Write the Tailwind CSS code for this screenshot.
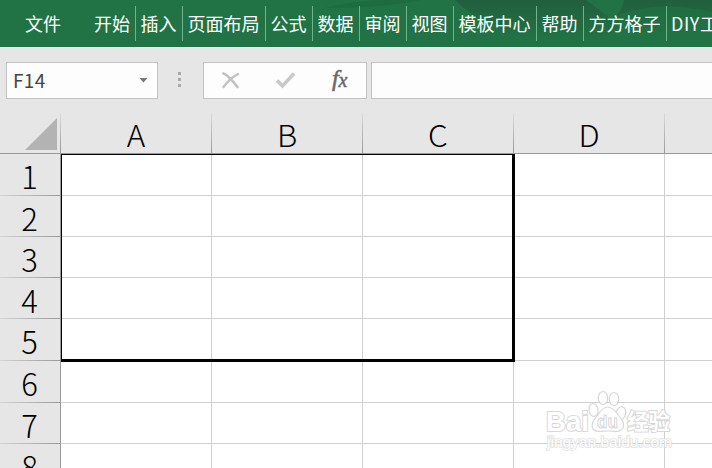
<!DOCTYPE html>
<html lang="zh-CN">
<head>
  <meta charset="UTF-8">
  <meta name="viewport" content="width=device-width, initial-scale=1.0">
  <title>Excel</title>
  <script src="https://cdn.jsdelivr.net/npm/@tailwindcss/browser@4"></script>
</head>
<body class="w-[712px] h-[468px] overflow-hidden relative flex flex-col bg-[#e6e6e6] font-['Noto_Sans_CJK_SC',sans-serif]">
  <!-- Ribbon tabs -->
  <nav class="relative h-[47px] shrink-0 bg-[#217346] text-white overflow-hidden">
    <svg class="absolute left-0 top-0" width="712" height="47">
      <defs>
        <linearGradient id="shade" x1="0" y1="0" x2="0" y2="1">
          <stop offset="0" stop-color="#215f3d"/>
          <stop offset="1" stop-color="#217346"/>
        </linearGradient>
      </defs>
      <path d="M325 8Q355 0 390 0H420Q385 8 325 8Z" fill="#1f6b40"/>
      <path d="M455 0H712V40H530Q480 25 455 0Z" fill="url(#shade)"/>
      <path d="M586 0H624Q622 12 612 20Q600 10 586 0Z" fill="#217346"/>
      <path d="M620 14Q660 0 712 12V47H600Z" fill="#217346" opacity=".6"/>
    </svg>
    <div class="relative flex h-full pt-[6px] text-[18px] leading-[35px] whitespace-nowrap">
      <div class="w-[89px] shrink-0 pl-[25px]">文件</div>
      <div class="flex shrink-0 h-[35px] text-center">
        <div class="w-[47px] border-r border-[#6fb38c]">开始</div>
        <div class="w-[47px] border-r border-[#6fb38c] pr-px">插入</div>
        <div class="w-[83px] border-r border-[#6fb38c] pr-px">页面布局</div>
        <div class="w-[47px] border-r border-[#6fb38c] pr-px">公式</div>
        <div class="w-[47px] border-r border-[#6fb38c] pr-px">数据</div>
        <div class="w-[47px] border-r border-[#6fb38c] pr-px">审阅</div>
        <div class="w-[47px] border-r border-[#6fb38c] pr-px">视图</div>
        <div class="w-[83px] border-r border-[#6fb38c] pr-px">模板中心</div>
        <div class="w-[47px] border-r border-[#6fb38c] pr-px">帮助</div>
        <div class="w-[83px] border-r border-[#6fb38c] pr-px">方方格子</div>
        <div class="pl-[4px] tracking-[0.6px]">DIY工</div>
      </div>
    </div>
  </nav>

  <!-- Formula bar -->
  <div class="flex h-[66px] shrink-0 pt-[15px] pl-[6px]">
    <div class="w-[152px] h-[37px] border border-[#c3c3c3] bg-[#fdfdfd] flex items-center justify-between pl-[6px] pr-[9px]">
      <span class="text-[19px] leading-[33px] pb-[2px] text-[#444] tracking-[0.3px]">F14</span>
      <svg width="9" height="5"><path d="M0.5 0H8.5L4.5 4.5Z" fill="#777"/></svg>
    </div>
    <div class="w-[45px] pt-[10px] pl-[20px] flex flex-col gap-[3px]">
      <i class="block size-[3px] bg-[#aaa]"></i>
      <i class="block size-[3px] bg-[#aaa]"></i>
      <i class="block size-[3px] bg-[#aaa]"></i>
    </div>
    <div class="w-[164px] h-[37px] border border-[#c3c3c3] bg-[#fdfdfd]">
      <svg width="162" height="35" fill="none">
        <path d="M19.5 10.500Q24 12 33.500 24" stroke="#c2c2c2" stroke-width="2.800" stroke-linecap="round"/>
        <path d="M34 11Q25 16 19.500 24" stroke="#c2c2c2" stroke-width="2.400" stroke-linecap="round"/>
        <path d="M73 17.500L78.500 23L90 10.500" stroke="#c9c9c9" stroke-width="3.600"/>
        <g fill="#6a6a6a" stroke="#6a6a6a" font-family="Liberation Serif, serif" font-style="italic">
          <text x="128" y="23" font-size="24" stroke-width=".6">f</text>
          <text x="134.500" y="24" font-size="20" stroke-width=".5">x</text>
        </g>
      </svg>
    </div>
    <div class="ml-[4px] h-[37px] flex-1 border border-r-0 border-[#c3c3c3] bg-[#fdfdfd]"></div>
  </div>

  <!-- Column headings -->
  <div class="flex h-[41px] shrink-0 border-b border-[#999] text-[30px] font-light leading-[43px] text-center text-black">
    <div class="w-[60px] flex items-end justify-end pr-[3px] pb-[3px]">
      <svg width="32" height="32"><path d="M32 0V32H0Z" fill="#b3b3b3"/></svg>
    </div>
    <div class="w-px bg-linear-to-b from-[#dcdcdc] to-[#999]"></div>
    <div class="w-[150px] scale-x-105">A</div>
    <div class="w-px bg-linear-to-b from-[#dcdcdc] to-[#999]"></div>
    <div class="w-[150px] scale-x-105">B</div>
    <div class="w-px bg-linear-to-b from-[#dcdcdc] to-[#999]"></div>
    <div class="w-[150px] scale-x-105">C</div>
    <div class="w-px bg-linear-to-b from-[#dcdcdc] to-[#999]"></div>
    <div class="w-[150px] scale-x-105">D</div>
    <div class="w-px bg-linear-to-b from-[#dcdcdc] to-[#999]"></div>
  </div>

  <!-- Sheet -->
  <div class="relative flex h-[314px] shrink-0 overflow-hidden">
    <div id="rows" class="w-[61px] border-r border-[#999] text-[31px] font-light leading-[43px] text-center text-black"></div>
    <div id="cells" class="flex-1 bg-white"></div>
    <div class="absolute left-[61px] top-0 w-[454px] h-[208px] border-black border-t border-l border-r-3 border-b-3"></div>
  </div>

  <!-- Watermark -->
  <svg class="absolute left-[540px] top-[385px]" width="150" height="75" fill="#fff" stroke="#d2d2d2" stroke-width="1.200" opacity=".85">
    <g font-family="Liberation Sans, sans-serif" font-weight="bold" paint-order="stroke" stroke-width="2">
      <text x="6" y="45.500" font-size="28" textLength="43" lengthAdjust="spacingAndGlyphs">Bai</text>
    </g>
    <ellipse cx="53.500" cy="25" rx="4.500" ry="6.500" transform="rotate(-8 53.5 25)"/>
    <ellipse cx="63" cy="13" rx="4.700" ry="6.500"/>
    <ellipse cx="74" cy="14" rx="4.700" ry="6.500"/>
    <ellipse cx="81" cy="28" rx="4.700" ry="6.500" transform="rotate(10 81 28)"/>
    <path d="M67.500 22C73 22 76 27 79 31C83 36 85 39 83 43C80 48 74 46 67.500 46C61 46 55 48 52.500 43C51 38 54 35 57 31C60 27 62 22 67.500 22Z"/>
    <text x="57" y="43" font-family="Liberation Sans, sans-serif" font-weight="bold" font-size="18" textLength="21" lengthAdjust="spacingAndGlyphs" stroke-width="1">du</text>
    <text x="87" y="44" font-family="Noto Sans CJK SC, sans-serif" font-weight="bold" font-size="22" textLength="43" lengthAdjust="spacingAndGlyphs" paint-order="stroke" stroke-width="2">经验</text>
    <text x="7" y="62" font-family="Liberation Sans, sans-serif" font-size="14" textLength="125" lengthAdjust="spacingAndGlyphs" stroke="#dedede" paint-order="stroke" stroke-width="1.600">jingyan.baidu.com</text>
  </svg>

  <script>
    // Row heights in pixels, bottom line included
    const heights = [42, 41, 41, 41, 42, 42, 41, 41];
    const rows = document.getElementById('rows');
    const cells = document.getElementById('cells');

    heights.forEach((height, i) => {
      rows.innerHTML += `
        <div class="flex flex-col" style="height: ${height}px">
          <div class="flex-1 min-h-0 pr-px">${i + 1}</div>
          <div class="h-px shrink-0 bg-linear-to-r from-[#d4d4d4] to-[#999]"></div>
        </div>`;
      cells.innerHTML += `
        <div class="flex border-b border-[#d0d0d0]" style="height: ${height}px">
          <div class="w-[151px] border-r border-[#d0d0d0]"></div>
          <div class="w-[151px] border-r border-[#d0d0d0]"></div>
          <div class="w-[151px] border-r border-[#d0d0d0]"></div>
          <div class="w-[151px] border-r border-[#d0d0d0]"></div>
        </div>`;
    });
  </script>
</body>
</html>
